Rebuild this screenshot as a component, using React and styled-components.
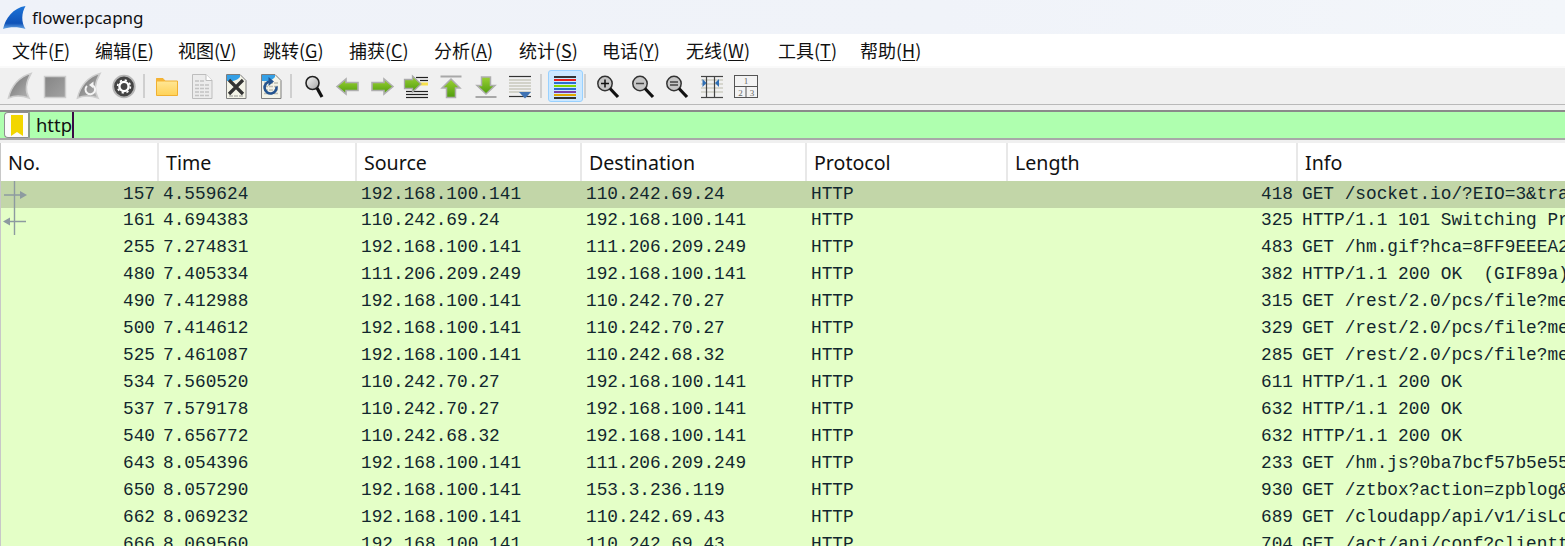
import React from "react";
import styled, { createGlobalStyle } from "styled-components";

const Global = createGlobalStyle`
  html, body { margin: 0; padding: 0; background: #f0f0f0; overflow: hidden; }
  #root { width: 1565px; height: 546px; overflow: hidden; }
`;
const Page = styled.div`
  width: 1565px; height: 546px; overflow: hidden; display: flex; flex-direction: column;
  background: #f0f0f0; font-family: "Noto Sans", "Noto Sans CJK SC", sans-serif;
`;
const TitleBar = styled.div`
  height: 34px; flex: none; display: flex; align-items: center; gap: 3px; padding-left: 2px;
  background: linear-gradient(90deg, #eff2f9 0%, #f0f3f9 60%, #f3f6fa 100%);
  font-size: 17px; color: #111;
`;
const MenuBar = styled.div`
  height: 32px; flex: none; display: flex; align-items: center; padding-left: 12px;
  background: #fff; font-family: "Noto Sans CJK SC", "Noto Sans", sans-serif; font-size: 18px; color: #111;
  border-bottom: 2px solid #fafafa;
  u { text-underline-offset: 2px; }
`;
const MenuItem = styled.span` white-space: nowrap; flex: none; width: ${p => p.$w}px; `;
const ToolBar = styled.div`
  height: 36px; flex: none; display: flex; align-items: center; padding-left: 3px;
  background: #f0f0f0; border-bottom: 1px solid #b9b9b9;
`;
const Tool = styled.div`
  width: 34.5px; height: 32px; flex: none; display: flex; align-items: center; justify-content: center;
  box-sizing: border-box; border-radius: 3px;
  border: 1px solid ${p => p.$on ? "#99d1ff" : "transparent"};
  background: ${p => p.$on ? "#cce8ff" : "transparent"};
`;
const Sep = styled.div`
  width: 2px; height: 24px; flex: none; background: #cfcfcf; margin: 0 ${p => p.$r}px 0 ${p => p.$l}px;
`;
const FilterWrap = styled.div`
  height: 30px; flex: none; margin-top: 5px; box-sizing: border-box; display: flex;
  border-top: 2px solid #8a8a8a; border-bottom: 2px solid #a8a8a8; padding-left: 4px;
  background: #afffaf;
`;
const BookMark = styled.div`
  width: 26px; flex: none; box-sizing: border-box; display: flex; align-items: center; justify-content: center;
  background: #fbfbfb; border: 1px solid #8f8f8f; border-radius: 4px 0 0 4px; border-right: 2px solid #8a9a8a;
`;
const FilterText = styled.div`
  padding-left: 6px; font-size: 18.4px; line-height: 26px; color: #111; display: flex; align-items: center;
`;
const Caret = styled.span` display: inline-block; width: 2px; height: 26px; background: #3b0a45; `;
const Table = styled.div`
  margin-top: 3px; flex: 1; min-height: 0; background: #fff; border-left: 1px solid #c8c8c8; overflow: hidden;
`;
const cols = "158px 198px 225px 225px 201px 290px 1fr";
const Head = styled.div`
  height: 38px; display: grid; grid-template-columns: ${cols}; background: #fff;
`;
const HeadCell = styled.div`
  padding-left: 7px; font-size: 19.6px; line-height: 40px; color: #111; border-right: 2px solid #e8e8e8; box-sizing: border-box; white-space: nowrap;
  &:last-child { border-right: 0; }
`;
const Row = styled.div`
  height: 27px; display: grid; grid-template-columns: ${cols}; position: relative;
  background: ${p => p.$sel ? "#c2d6a8" : "#e4ffc7"};
  font-family: "Liberation Mono", monospace; font-size: 17.8px; line-height: ${p => p.$sel ? "26px" : "24.5px"}; color: #12272e;
`;
const Cell = styled.div`
  padding: 0 ${p => p.$right ? `${p.$right}px` : "0"} 0 ${p => p.$right ? "0" : "4px"};
  text-align: ${p => p.$right ? "right" : "left"};
  white-space: pre; overflow: hidden;
`;
const Mark = styled.svg`
  position: absolute; left: 0; top: 0; pointer-events: none;
`;

const Fin = () => (
  <path d="M2.500 26C5 14.500 13 4.500 25 1.500C20 10 19 19 23 26C16 23.500 8 23.500 2.500 26Z" fill="url(#gfin)" stroke="#cdcdcd" strokeWidth="1.500" />
);
const Svg = ({ children, w = 28, h = 28 }) => (
  <svg width={w} height={h} viewBox={`0 0 ${w} ${h}`}>{children}</svg>
);
const Bits = ({ x, y, rows = 3, c = "#8a8a8a", n = 3 }) => (
  <g stroke={c} strokeWidth="1.300" strokeDasharray="1 1">
    {Array.from({ length: rows }).map((_, r) =>
      Array.from({ length: n }).map((_, k) => (
        <line key={r + "-" + k} x1={x + k * 5} x2={x + k * 5 + 4} y1={y + r * 3.5} y2={y + r * 3.5} />
      )))}
  </g>
);
const Doc = ({ children, fill = "#f4f4e8", stroke = "#7d7d7d" }) => (
  <g>
    <path d="M4.500 2.500H18L24 8.500V26.500H4.500Z" fill={fill} stroke={stroke} />
    {children}
  </g>
);
const Icons = {
  fin: () => <Svg><Fin /></Svg>,
  stop: () => <Svg><rect x="3.500" y="4.500" width="21" height="21" fill="url(#gstop)" stroke="#cdcdcd" strokeWidth="1.500" /></Svg>,
  restart: () => (
    <Svg><Fin />
      <path d="M18 13.500a4.800 4.800 0 1 1-6 .5" fill="none" stroke="#f4f4f4" strokeWidth="2" />
      <path d="M18.500 9.500v7l-4.500-3.500z" fill="#f4f4f4" />
    </Svg>
  ),
  gear: () => (
    <Svg>
      <circle cx="14" cy="14.500" r="10.800" fill="#444" stroke="#b5b5b5" strokeWidth="1.800" />
      <circle cx="14" cy="14.500" r="4.600" fill="none" stroke="#fff" strokeWidth="2.400" />
      <circle cx="14" cy="14.500" r="6.400" fill="none" stroke="#fff" strokeWidth="1.600" strokeDasharray="2.200 2.820" />
    </Svg>
  ),
  folder: () => (
    <Svg>
      <path d="M3.500 6.500H10L12 9H24.500V23.500H3.500Z" fill="url(#gfolder)" stroke="#f0b030" />
      <path d="M3 6.500H10L12 9.500H3Z" fill="#f5b335" />
    </Svg>
  ),
  docGray: () => (
    <Svg>
      <Doc fill="#ececec" stroke="#bdbdbd">
        <path d="M18 2.500V8.500H24" fill="#fff" stroke="#bdbdbd" />
        <Bits x={7.5} y={13} rows={4} c="#9a9a9a" n={3} />
        <Bits x={7.5} y={9} rows={1} c="#9a9a9a" n={2} />
      </Doc>
    </Svg>
  ),
  docX: () => (
    <Svg>
      <Doc>
        <path d="M5 3H18V5C15 9 9 9.500 5 9Z" fill="#35a0e6" />
        <Bits x={7.5} y={24} rows={1} c="#777" />
      </Doc>
      <path d="M7 8L21 22M21 8L7 22" stroke="#333" strokeWidth="3.200" />
    </Svg>
  ),
  docR: () => (
    <Svg>
      <Doc>
        <path d="M5 3H18V5C15 9 9 9.500 5 9Z" fill="#35a0e6" />
        <Bits x={7.5} y={11} rows={4} c="#8a8a7a" />
      </Doc>
      <path d="M19.500 14.500a6 6 0 1 1-6.500-5" fill="none" stroke="#24548f" strokeWidth="2.600" />
      <path d="M11.500 5V14l5.500-4.500z" fill="#24548f" />
    </Svg>
  ),
  find: () => (
    <Svg>
      <circle cx="13.500" cy="11" r="6.500" fill="url(#gglass)" stroke="#222" strokeWidth="1.600" />
      <path d="M18 16L23 25" stroke="#111" strokeWidth="3.200" />
    </Svg>
  ),
  left: () => (
    <Svg><path d="M3 14.500L12 7V10.500H24V18.500H12V22Z" fill="url(#ggreen)" stroke="#aeaeae" strokeWidth="1.600" /></Svg>
  ),
  right: () => (
    <Svg><path d="M25 14.500L16 7V10.500H4V18.500H16V22Z" fill="url(#ggreen)" stroke="#aeaeae" strokeWidth="1.600" /></Svg>
  ),
  goto: () => (
    <Svg>
      <g stroke="#222" strokeWidth="1.200">
        <line x1="13" x2="25" y1="5.500" y2="5.500" /><line x1="3" x2="25" y1="19.500" y2="19.500" /><line x1="3" x2="25" y1="22.500" y2="22.500" /><line x1="3" x2="25" y1="25.500" y2="25.500" /><line x1="17" x2="25" y1="8.500" y2="8.500" />
      </g>
      <rect x="17" y="10.500" width="8" height="3" fill="#f7e04b" />
      <path d="M18 12L9.500 4V7.500H1.500V16.500H9.500V20Z" fill="url(#ggreen)" stroke="#a8a8a8" strokeWidth="1.300" />
    </Svg>
  ),
  top: () => (
    <Svg>
      <line x1="3.500" x2="24.500" y1="4.500" y2="4.500" stroke="#a8a8a8" strokeWidth="2" />
      <path d="M14 7L23 16H18.500V25.500H9.500V16H5Z" fill="url(#ggreen)" stroke="#aeaeae" strokeWidth="1.500" />
    </Svg>
  ),
  bottom: () => (
    <Svg>
      <line x1="3.500" x2="24.500" y1="25" y2="25" stroke="#a8a8a8" strokeWidth="2" />
      <path d="M14 22L23 13.500H18.500V5H9.500V13.500H5Z" fill="url(#ggreen)" stroke="#aeaeae" strokeWidth="1.500" />
    </Svg>
  ),
  auto: () => (
    <Svg>
      <g strokeWidth="1.500" stroke="#c8c8bc">
        <line x1="3" x2="25" y1="8" y2="8" /><line x1="3" x2="25" y1="11" y2="11" /><line x1="3" x2="25" y1="14" y2="14" /><line x1="3" x2="25" y1="17" y2="17" /><line x1="3" x2="25" y1="20" y2="20" />
      </g>
      <line x1="3" x2="25" y1="4.500" y2="4.500" stroke="#333" strokeWidth="1.200" />
      <line x1="3" x2="25" y1="24.500" y2="24.500" stroke="#333" strokeWidth="1.200" />
      <path d="M13 20H25L19 26.500Z" fill="#3f72b3" />
    </Svg>
  ),
  color: () => (
    <Svg>
      {["#333333", "#e8201c", "#2a6fd0", "#86d800", "#2a6fd0", "#7a3fa8", "#e0a800", "#333333"].map((c, i) => (
        <rect key={c + i} x="3" y={4 + i * 3} width="22" height="2" fill={c} />
      ))}
    </Svg>
  ),
  zoomIn: () => <Zoom><path d="M7 11.500H15M11 7.500V15.500" stroke="#111" strokeWidth="1.500" /></Zoom>,
  zoomOut: () => <Zoom><path d="M7 11.500H15" stroke="#444" strokeWidth="1.500" /></Zoom>,
  zoomEq: () => <Zoom><path d="M7 10H15M7 13H15" stroke="#444" strokeWidth="1.300" /></Zoom>,
  resize: () => (
    <Svg>
      <g stroke="#c8c8bc" strokeWidth="1.300">
        <line x1="3" x2="25" y1="8" y2="8" /><line x1="3" x2="25" y1="12" y2="12" /><line x1="3" x2="25" y1="16" y2="16" /><line x1="3" x2="25" y1="20" y2="20" />
      </g>
      <g stroke="#444" strokeWidth="1.200">
        <line x1="3" x2="25" y1="4.500" y2="4.500" /><line x1="3" x2="25" y1="25.500" y2="25.500" />
        <line x1="8.500" x2="8.500" y1="4" y2="26" /><line x1="16.500" x2="16.500" y1="4" y2="26" />
      </g>
      <path d="M4.500 7V15L8.500 11Z" fill="#2f6fb5" />
      <path d="M21 7V15L17 11Z" fill="#2f6fb5" />
    </Svg>
  ),
  panes: () => (
    <Svg>
      <rect x="2.500" y="3.500" width="23" height="22" fill="#f3f3f3" stroke="#555" />
      <path d="M2.500 14.500H25.500M14 14.500V25.500" stroke="#555" />
      <g fill="#666" fontFamily="Liberation Serif, serif" fontSize="9" textAnchor="middle">
        <text x="14" y="12">1</text><text x="8.500" y="23.500">2</text><text x="20" y="23.500">3</text>
      </g>
    </Svg>
  ),
};
const Zoom = ({ children }) => (
  <Svg>
    <circle cx="11" cy="11.500" r="7.200" fill="#c6c6c6" stroke="#333" strokeWidth="1.500" />
    {children}
    <path d="M16 16.500L24 25" stroke="#111" strokeWidth="3.200" />
  </Svg>
);

const Defs = () => (
  <svg width="0" height="0" style={{ position: "absolute" }}>
    <defs>
      <linearGradient id="gfin" x1="0" y1="0" x2="1" y2="1"><stop offset="0" stopColor="#6f6f6f" /><stop offset="1" stopColor="#b5b5b5" /></linearGradient>
      <linearGradient id="gstop" x1="0" y1="0" x2="1" y2="1"><stop offset="0" stopColor="#858585" /><stop offset="1" stopColor="#a2a2a2" /></linearGradient>
      <linearGradient id="gfolder" x1="0" y1="0" x2="0" y2="1"><stop offset="0" stopColor="#ffeaa0" /><stop offset="1" stopColor="#ffd257" /></linearGradient>
      <linearGradient id="gglass" x1="0" y1="0" x2="1" y2="1"><stop offset="0" stopColor="#f7f7f7" /><stop offset="1" stopColor="#a5a5a5" /></linearGradient>
      <linearGradient id="ggreen" x1="0" y1="0" x2="0" y2="1"><stop offset="0" stopColor="#9bd233" /><stop offset="1" stopColor="#4f9c0e" /></linearGradient>
      <linearGradient id="gshark" x1="0" y1="0" x2="0" y2="1"><stop offset="0" stopColor="#1d74d8" /><stop offset="0.75" stopColor="#0f52b8" /><stop offset="1" stopColor="#6aa8e6" /></linearGradient>
    </defs>
  </svg>
);

const menus = [["文件(", "F", 83], ["编辑(", "E", 83], ["视图(", "V", 85], ["跳转(", "G", 86], ["捕获(", "C", 85], ["分析(", "A", 85], ["统计(", "S", 83], ["电话(", "Y", 84], ["无线(", "W", 92], ["工具(", "T", 82], ["帮助(", "H", 70]];
const toolbar = [
  ["fin"], ["stop"], ["restart"], ["gear"], [null, 2, 5],
  ["folder"], ["docGray"], ["docX"], ["docR"], [null, 2, 4],
  ["find"], ["left"], ["right"], ["goto"], ["top"], ["bottom"], ["auto"], [null, 2.5, 6],
  ["color", 0, 0, true], [null, 1.5, 5], ["zoomIn"], ["zoomOut"], ["zoomEq"], ["resize"], ["panes"],
];
const A = "192.168.100.141";
const rows = [
  [157, "4.559624", A, "110.242.69.24", 418, "GET /socket.io/?EIO=3&transport=websocket"],
  [161, "4.694383", "110.242.69.24", A, 325, "HTTP/1.1 101 Switching Protocols"],
  [255, "7.274831", A, "111.206.209.249", 483, "GET /hm.gif?hca=8FF9EEEA2B7C4D10"],
  [480, "7.405334", "111.206.209.249", A, 382, "HTTP/1.1 200 OK  (GIF89a)"],
  [490, "7.412988", A, "110.242.70.27", 315, "GET /rest/2.0/pcs/file?method=locate"],
  [500, "7.414612", A, "110.242.70.27", 329, "GET /rest/2.0/pcs/file?method=locate"],
  [525, "7.461087", A, "110.242.68.32", 285, "GET /rest/2.0/pcs/file?method=locate"],
  [534, "7.560520", "110.242.70.27", A, 611, "HTTP/1.1 200 OK"],
  [537, "7.579178", "110.242.70.27", A, 632, "HTTP/1.1 200 OK"],
  [540, "7.656772", "110.242.68.32", A, 632, "HTTP/1.1 200 OK"],
  [643, "8.054396", A, "111.206.209.249", 233, "GET /hm.js?0ba7bcf57b5e55fbfbab9a"],
  [650, "8.057290", A, "153.3.236.119", 930, "GET /ztbox?action=zpblog&appname"],
  [662, "8.069232", A, "110.242.69.43", 689, "GET /cloudapp/api/v1/isLogin"],
  [666, "8.069560", A, "110.242.69.43", 704, "GET /act/api/conf?clienttype=0"],
];

export default function App() {
  return (
    <Page>
      <Global />
      <Defs />
      <TitleBar>
        <svg width="27" height="30" viewBox="0 0 27 30">
          <path d="M1 27C3.500 16 11 6 23.500 4C19.500 11 19 20 23.500 27C16 24.500 8 24.500 1 27Z" fill="url(#gshark)" />
        </svg>
        <span>flower.pcapng</span>
      </TitleBar>
      <MenuBar>
        {menus.map(([a, b, w]) => <MenuItem key={b} $w={w}>{a}<u>{b}</u>)</MenuItem>)}
      </MenuBar>
      <ToolBar>
        {toolbar.map(([name, l, r, on], i) => {
          if (!name) return <Sep key={i} $l={l} $r={r} />;
          const I = Icons[name];
          return <Tool key={i} $on={on}><I /></Tool>;
        })}
      </ToolBar>
      <FilterWrap>
        <BookMark>
          <svg width="14" height="21" viewBox="0 0 14 21"><path d="M1 0H13V21L7 17L1 21Z" fill="#f2d600" /></svg>
        </BookMark>
        <FilterText>http<Caret /></FilterText>
      </FilterWrap>
      <Table>
        <Head>
          {["No.", "Time", "Source", "Destination", "Protocol", "Length", "Info"].map(h => <HeadCell key={h}>{h}</HeadCell>)}
        </Head>
        {rows.map((r, i) => (
          <Row key={r[0]} $sel={i === 0}>
            <Cell $right={4}>{r[0]}</Cell>
            <Cell>{r[1]}</Cell>
            <Cell>{r[2]}</Cell>
            <Cell>{r[3]}</Cell>
            <Cell>HTTP</Cell>
            <Cell $right={5}>{r[4]}</Cell>
            <Cell>{r[5]}</Cell>
            {i === 0 && (
              <Mark width="30" height="27" viewBox="0 0 30 27">
                <path d="M13.500 0V27M3 14H20" stroke="#8d9aa0" strokeWidth="1.400" />
                <path d="M19 10L26 14L19 18Z" fill="#8d9aa0" />
              </Mark>
            )}
            {i === 1 && (
              <Mark width="30" height="27" viewBox="0 0 30 27">
                <path d="M13.500 0V27M5 13.500H25" stroke="#8d9aa0" strokeWidth="1.400" />
                <path d="M9 9.500L2 13.500L9 17.500Z" fill="#8d9aa0" />
              </Mark>
            )}
          </Row>
        ))}
      </Table>
    </Page>
  );
}
